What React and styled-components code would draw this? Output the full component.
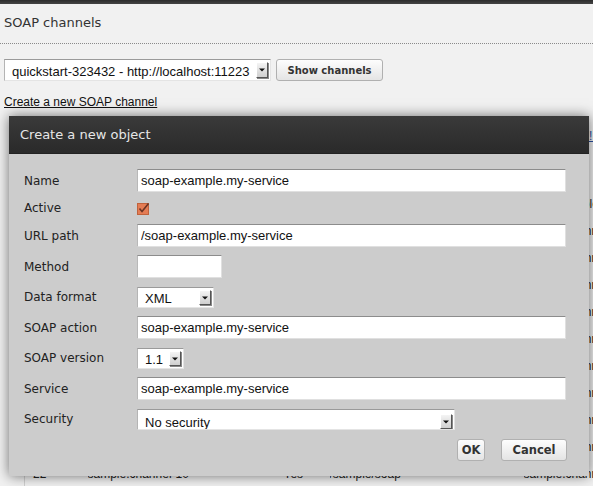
import React from 'react';
import styled, { createGlobalStyle } from 'styled-components';

const GlobalStyle = createGlobalStyle`
  html, body {
    margin: 0;
    padding: 0;
    background: #f1f1f1;
    font-family: "DejaVu Sans", Verdana, sans-serif;
    color: #333;
  }
`;

const Page = styled.div`
  position: relative;
  width: 593px;
  height: 486px;
  overflow: hidden;
  background: #f1f1f1;
`;

const TopBar = styled.div`
  height: 4px;
  background: linear-gradient(#2c2c2c, #444);
`;

const Title = styled.h1`
  margin: 0;
  padding: 11px 4px 0;
  height: 28px;
  font-size: 13px;
  font-weight: normal;
  line-height: 16px;
  color: #333;
`;

const Divider = styled.div`
  border-top: 1px dotted #8a8a8a;
`;

const Toolbar = styled.div`
  display: flex;
  align-items: center;
  gap: 5px;
  margin: 15px 0 0 4px;
`;

const SelectBox = styled.div`
  box-sizing: border-box;
  display: flex;
  align-items: ${(p) => (p.$low ? 'flex-start' : 'center')};
  justify-content: space-between;
  width: ${(p) => p.$w}px;
  height: ${(p) => p.$h || 21}px;
  padding: ${(p) => (p.$low ? '5px 2px 0 7px' : '0 2px 0 7px')};
  background: #fff;
  border: 1px solid;
  border-color: #9a9a9a #e4e4e4 #e4e4e4 #b4b4b4;
  font-family: "Liberation Sans", Arial, sans-serif;
  font-size: 13px;
  color: #111;
  overflow: hidden;
  white-space: nowrap;
`;

const SelectText = styled.span`
  padding-top: ${(p) => (p.$low ? 0 : 2)}px;
`;

const ArrowBox = styled.span`
  box-sizing: border-box;
  display: flex;
  align-items: center;
  justify-content: center;
  flex: none;
  width: 12px;
  height: ${(p) => p.$h || 15}px;
  margin-left: 4px;
  background: linear-gradient(#f4f4f4, #cfcfcf);
  border: 1px solid;
  border-color: #fff #555 #555 #fff;
  box-shadow: 1px 1px 0 #888;
`;

const Arrow = () => (
  <svg width="6" height="4" viewBox="0 0 6 4">
    <path d="M0 0.5h6L3 3.5z" fill="#111" />
  </svg>
);

const PushButton = styled.button`
  box-sizing: border-box;
  width: ${(p) => p.$w}px;
  height: 22px;
  padding: 0;
  background: linear-gradient(#fdfdfd, #e4e4e4);
  border: 1px solid #b0b0b0;
  border-radius: 3px;
  font-family: "DejaVu Sans", Verdana, sans-serif;
  font-size: ${(p) => p.$size || 11.5}px;
  font-weight: bold;
  white-space: nowrap;
  color: #333;
  cursor: pointer;
`;

const CreateLink = styled.a`
  display: inline-block;
  margin: 14px 0 0 4px;
  font-family: "Liberation Sans", Arial, sans-serif;
  font-size: 12px;
  line-height: 14px;
  color: #111;
  text-decoration: underline;
`;

const Caption = styled.div`
  margin: 19px 0 0 589px;
  height: 16px;
  font-family: "Liberation Sans", Arial, sans-serif;
  font-size: 12px;
  color: #2a4fa0;
  text-decoration: underline;
  white-space: nowrap;
`;

const ChannelTable = styled.table`
  width: 699px;
  margin-left: 24px;
  table-layout: fixed;
  border-collapse: collapse;
  border-left: 1px solid #d0d0d0;
  font-family: "Liberation Sans", Arial, sans-serif;
  font-size: 12px;
  color: #222;
  white-space: nowrap;
`;

const HeadCell = styled.th`
  width: ${(p) => p.$w}px;
  height: 45px;
  padding: 14px 0 0 ${(p) => p.$pad || 0}px;
  vertical-align: top;
  text-align: left;
  font-weight: bold;
  box-sizing: border-box;
`;

const Cell = styled.td`
  height: 27px;
  padding: 0 0 0 ${(p) => p.$pad || 0}px;
  box-sizing: border-box;
  overflow: hidden;
`;

const Dialog = styled.div`
  position: absolute;
  left: 9px;
  top: 116px;
  width: 580px;
  height: 360px;
  display: flex;
  flex-direction: column;
  background: #cccccc;
  box-shadow: 0 0 12px rgba(0, 0, 0, 0.55);
`;

const DialogHeader = styled.div`
  height: 38px;
  display: flex;
  align-items: center;
  padding-left: 11px;
  background: linear-gradient(#3a3a3a, #2a2a2a);
  border-bottom: 1px solid #222;
  box-sizing: border-box;
  font-size: 13px;
  color: #e6e6e6;
`;

const DialogBody = styled.div`
  padding: 15px 22px 0 15px;
`;

const Form = styled.div`
  display: grid;
  grid-template-columns: 113px 1fr;
  row-gap: 8px;
  align-items: center;
`;

const Label = styled.label`
  font-size: 12px;
  color: #222;
`;

const Field = styled.div`
  display: flex;
  align-items: ${(p) => (p.$top ? 'flex-start' : 'center')};
  height: ${(p) => p.$h || 23}px;
  padding-top: ${(p) => (p.$top ? 1 : 0)}px;
  box-sizing: border-box;
`;

const TextInput = styled.input`
  box-sizing: border-box;
  width: ${(p) => p.$w || 429}px;
  height: 23px;
  padding: 0 3px;
  margin: 0;
  background: #fff;
  border: 1px solid;
  border-color: #8c8c8c #e0e0e0 #e0e0e0 #b8b8b8;
  font-family: "Liberation Sans", Arial, sans-serif;
  font-size: 13px;
  color: #111;
  outline: none;
`;

const Check = () => (
  <svg width="13" height="13" viewBox="0 0 13 13">
    <rect x="0.5" y="1.5" width="11" height="11" fill="#e47c54" stroke="#c0623c" />
    <path d="M2.5 6.5l2.5 3L11.5 1.5" fill="none" stroke="#6a3424" strokeWidth="1.6" />
  </svg>
);

const ButtonRow = styled.div`
  display: flex;
  justify-content: flex-end;
  gap: 16px;
  margin-top: 9px;
`;

const rows = [
  ['12', 'soap-example.my-service', 'Yes', '/soap-example/soap', 'soap-example.my-service'],
];
for (let i = 1; i < 12; i++) {
  rows.push([String(12 + i), 'sample.channel-' + i, 'Yes', '/sample/soap', 'sample.channel-service']);
}

export default function App() {
  return (
    <Page>
      <GlobalStyle />
      <TopBar />
      <Title>SOAP channels</Title>
      <Divider />
      <Toolbar>
        <SelectBox $w={267} $h={22}>
          <SelectText>quickstart-323432 - http://localhost:11223</SelectText>
          <ArrowBox $h={16}><Arrow /></ArrowBox>
        </SelectBox>
        <PushButton $size={10} $w={107}>Show channels</PushButton>
      </Toolbar>
      <CreateLink href="#">Create a new SOAP channel</CreateLink>
      <Caption>! Delete</Caption>
      <ChannelTable>
        <thead>
          <tr>
            <HeadCell $w={63} $pad={8}>Id</HeadCell>
            <HeadCell $w={196}>Name</HeadCell>
            <HeadCell $w={46}>Active</HeadCell>
            <HeadCell $w={194}>URL path</HeadCell>
            <HeadCell $w={200}>Service</HeadCell>
          </tr>
        </thead>
        <tbody>
          {rows.map((r) => (
            <tr key={r[0]}>
              <Cell $pad={8}>{r[0]}</Cell>
              <Cell>{r[1]}</Cell>
              <Cell>{r[2]}</Cell>
              <Cell>{r[3]}</Cell>
              <Cell>{r[4]}</Cell>
            </tr>
          ))}
        </tbody>
      </ChannelTable>

      <Dialog>
        <DialogHeader>Create a new object</DialogHeader>
        <DialogBody>
          <Form>
            <Label>Name</Label>
            <Field><TextInput defaultValue="soap-example.my-service" /></Field>

            <Label>Active</Label>
            <Field $h={16}><Check /></Field>

            <Label>URL path</Label>
            <Field><TextInput defaultValue="/soap-example.my-service" /></Field>

            <Label>Method</Label>
            <Field><TextInput $w={85} defaultValue="" /></Field>

            <Label>Data format</Label>
            <Field $h={22} $top>
              <SelectBox $w={77}>
                <SelectText>XML</SelectText>
                <ArrowBox><Arrow /></ArrowBox>
              </SelectBox>
            </Field>

            <Label>SOAP action</Label>
            <Field><TextInput defaultValue="soap-example.my-service" /></Field>

            <Label>SOAP version</Label>
            <Field $h={22} $top>
              <SelectBox $w={47}>
                <SelectText>1.1</SelectText>
                <ArrowBox><Arrow /></ArrowBox>
              </SelectBox>
            </Field>

            <Label>Service</Label>
            <Field><TextInput defaultValue="soap-example.my-service" /></Field>

            <Label>Security</Label>
            <Field $h={22} $top>
              <SelectBox $w={318} $h={21} $low>
                <SelectText $low>No security</SelectText>
                <ArrowBox style={{ marginTop: -1 }}><Arrow /></ArrowBox>
              </SelectBox>
            </Field>
          </Form>
          <ButtonRow>
            <PushButton $w={28}>OK</PushButton>
            <PushButton $w={66}>Cancel</PushButton>
          </ButtonRow>
        </DialogBody>
      </Dialog>
    </Page>
  );
}
